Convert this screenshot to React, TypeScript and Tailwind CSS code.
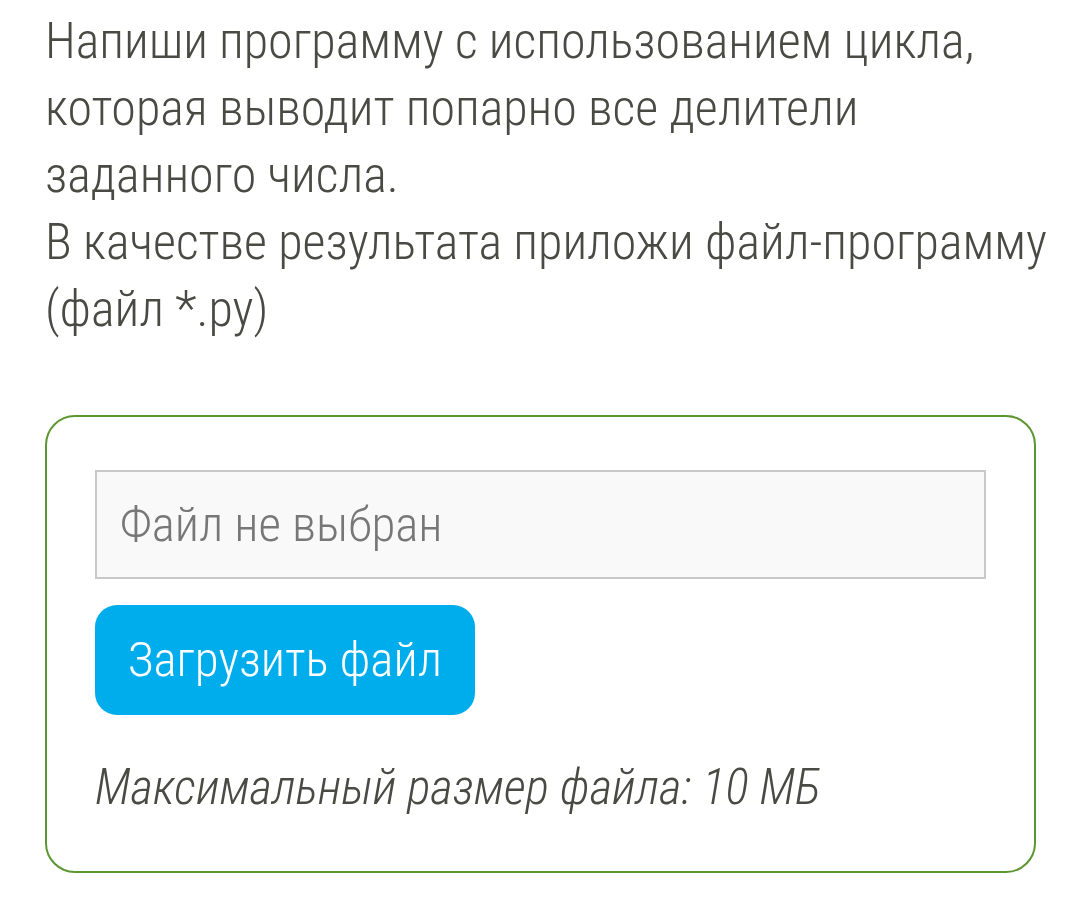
export default function App() {
  return (
    <div className="min-h-[913px] w-[1070px] overflow-hidden bg-white px-[45px] pt-[8px] font-['Roboto_Condensed','Roboto',sans-serif] font-light text-[#4a4a44]">
      <p className="w-[1020px] text-[50px] leading-[67px]">
        Напиши программу с использованием цикла, которая выводит попарно все делители заданного числа.
        <br />
        В качестве результата приложи файл-программу (файл *.py)
      </p>

      <div className="mt-[72px] h-[458px] w-[991px] rounded-[30px] border-2 border-[#5b9631] px-[48px] pt-[53px]">
        <div className="flex h-[109px] items-center border-2 border-[#c9c9c9] bg-[#f9f9f9] px-[23px] text-[49px] text-[#777]">
          Файл не выбран
        </div>
        <button className="mt-[26px] flex h-[110px] items-center rounded-[22px] bg-[#00adec] px-[33px] text-[49px] text-white">
          Загрузить файл
        </button>
        <p className="mt-[36px] text-[49px] italic text-[#4a4a44]">Максимальный размер файла: 10 МБ</p>
      </div>
    </div>
  );
}
